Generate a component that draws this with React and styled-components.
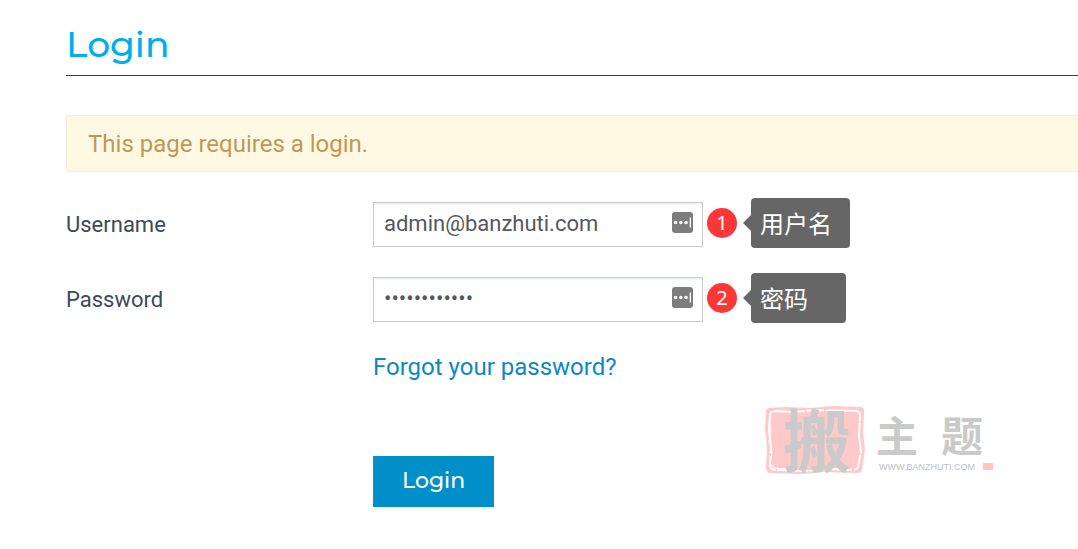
import React from "react";
import styled, { createGlobalStyle } from "styled-components";

const GlobalStyle = createGlobalStyle`
  * {
    box-sizing: border-box;
  }
  body {
    margin: 0;
    background: #fff;
    color: #3d4a57;
    font-family: Roboto, "Noto Sans CJK SC", sans-serif;
    font-size: 22px;
    line-height: 30px;
  }
`;

const Page = styled.main`
  position: relative;
  padding: 20px 0 40px 66px;
  overflow: hidden;
`;

const Title = styled.h1`
  margin: 0 0 39px;
  padding-bottom: 7px;
  border-bottom: 1px solid #2d3e4c;
  color: #00aeef;
  font-family: Montserrat, Inter, sans-serif;
  font-size: 36px;
  font-weight: 500;
  line-height: 48px;
`;

const Alert = styled.div`
  margin-bottom: 30px;
  padding: 13px 21px 12px;
  border: 1px solid #fbeed5;
  border-right: 0;
  background: #fff8e3;
  color: #c09853;
  font-size: 24px;
`;

const Form = styled.form`
  display: grid;
  grid-template-columns: 307px 1fr;
  row-gap: 30px;
`;

const Label = styled.label`
  padding-top: 8px;
`;

const Field = styled.div`
  position: relative;
  width: 330px;
`;

const Input = styled.input`
  display: block;
  width: 100%;
  height: 45px;
  padding: 0 44px 2px 10px;
  border: 1px solid #c8cacc;
  border-radius: 0;
  outline: 0;
  background: #fff;
  box-shadow: inset 0 2px 2px #f0f3f3;
  color: #555761;
  font-family: Roboto, sans-serif;
  font-size: 22px;
`;

const KeyIcon = styled.svg`
  position: absolute;
  top: 10px;
  right: 10px;
  width: 21px;
  height: 21px;
`;

const Annotation = styled.div`
  position: absolute;
  top: -4px;
  left: 100%;
  display: flex;
  align-items: center;
  gap: 14px;
  padding-left: 4px;
  white-space: nowrap;
`;

const Badge = styled.span`
  width: 30px;
  height: 30px;
  border-radius: 50%;
  background: #fc3737;
  color: #fff;
  font-family: "Noto Sans", sans-serif;
  font-size: 20px;
  text-align: center;
`;

const Callout = styled.span`
  position: relative;
  min-width: 95px;
  padding: 10px 18px 10px 9px;
  border-radius: 4px;
  background: #666;
  color: #fff;
  font-family: "Noto Sans CJK SC", sans-serif;
  font-size: 24px;

  &::before {
    content: "";
    position: absolute;
    top: 17px;
    right: 100%;
    border: 8px solid transparent;
    border-left: 0;
    border-right-color: #666;
  }
`;

const Actions = styled.div`
  grid-column: 2;
  display: flex;
  flex-direction: column;
  align-items: flex-start;
  gap: 74px;
`;

const ForgotLink = styled.a`
  color: #0a8ac4;
  font-size: 24px;
  text-decoration: none;
`;

const LoginButton = styled.button`
  padding: 10px 29px 11px;
  border: 0;
  background: #008fc9;
  color: #fff;
  font-family: Montserrat, Inter, sans-serif;
  font-size: 22px;
  font-weight: 500;
  line-height: 30px;
  cursor: pointer;
`;

const Watermark = styled.svg`
  position: absolute;
  top: 404px;
  left: 763px;
  width: 232px;
  height: 74px;
  overflow: visible;
  pointer-events: none;
`;

const FillIcon = () => (
  <KeyIcon viewBox="0 0 21 21" aria-hidden="true">
    <rect width="21" height="21" rx="3" fill="#7d7d7d" />
    <circle cx="3.6" cy="10.5" r="1.8" fill="#fff" />
    <circle cx="8.8" cy="10.5" r="1.8" fill="#fff" />
    <circle cx="14" cy="10.5" r="1.8" fill="#fff" />
    <path d="M18.3 5.5v10" stroke="#fff" strokeWidth="1.3" />
  </KeyIcon>
);

const SiteMark = () => (
  <Watermark viewBox="0 0 232 74" role="img" aria-label="搬主题">
    <path
      d="M6 4 L22 3 48 4 70 2 98 3 Q102 4 101 9 L100 28 102 45 99 66 Q99 69 93 69 L60 68 38 70 8 69 Q3 69 3 64 L4 44 2 24 3 8 Q3 4 6 4Z"
      fill="#ffc9c9"
    />
    <path
      d="M11 7 L31 8 52 6 94 7 Q97 8 97 12 L96 31 98 48 95 63 Q94 66 89 66 L65 65 45 67 12 66 Q7 65 7 61 L8 43 6 27 7 12 Q7 8 11 7Z"
      fill="none"
      stroke="#fff"
      strokeWidth="2"
      strokeDasharray="31 1 18 2 43 1"
    />
    <path
      d="M6 15 L8 28 6 36 9 49 7 59 11 64 26 65"
      fill="none"
      stroke="#fff"
      strokeWidth="1"
    />
    <g fill="#cacaca" fontFamily="'Noto Sans CJK SC', sans-serif" fontWeight="700">
      <text x="54" y="63" fontSize="68" textAnchor="middle">搬</text>
      <text x="134" y="48" fontSize="42" textAnchor="middle">主</text>
      <text x="199" y="48" fontSize="42" textAnchor="middle">题</text>
    </g>
    <text x="116" y="66" fill="#bdbdc2" fontFamily="'Liberation Sans', sans-serif" fontSize="9">
      WWW.BANZHUTI.COM
    </text>
    <rect x="220" y="59" width="10" height="7" fill="#ffc4c4" />
  </Watermark>
);

const LoginField = ({ id, label, number, note, ...input }) => (
  <>
    <Label htmlFor={id}>{label}</Label>
    <Field>
      <Input id={id} name={id} {...input} />
      <FillIcon />
      <Annotation>
        <Badge>{number}</Badge>
        <Callout>{note}</Callout>
      </Annotation>
    </Field>
  </>
);

const App = () => (
  <>
    <GlobalStyle />
    <Page>
      <Title>Login</Title>
      <Alert role="status">This page requires a login.</Alert>
      <Form onSubmit={(e) => e.preventDefault()}>
        <LoginField
          id="username"
          label="Username"
          type="text"
          defaultValue="admin@banzhuti.com"
          number="1"
          note="用户名"
        />
        <LoginField
          id="password"
          label="Password"
          type="password"
          defaultValue="banzhuti2020"
          number="2"
          note="密码"
        />
        <Actions>
          <ForgotLink href="#forgot">Forgot your password?</ForgotLink>
          <LoginButton type="submit">Login</LoginButton>
        </Actions>
      </Form>
      <SiteMark />
    </Page>
  </>
);

export default App;
